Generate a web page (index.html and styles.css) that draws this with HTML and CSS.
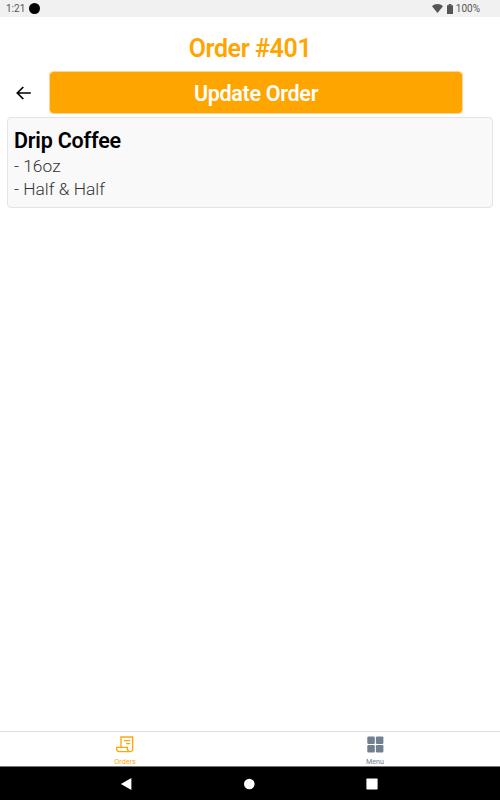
FILE: index.html
```html
<!DOCTYPE html>
<html lang="en">
<head>
  <meta charset="UTF-8" />
  <meta name="viewport" content="width=device-width, initial-scale=1.0"/>
  <title>Order #401</title>
  <link rel="stylesheet" href="styles.css">
</head>
<body>

  <div class="status-bar">
    <span class="time">1:21</span>
    <span class="dot"></span>
    <svg class="wifi" width="11" height="9" viewBox="0 0 11 9"><path d="M0 2.2C3-.6 8-.6 11 2.2L5.5 9z"/></svg>
    <svg class="battery" width="6" height="10" viewBox="0 0 6 10"><path d="M0 1.2h1.7V0h2.6v1.2H6V10H0z"/></svg>
    <span class="percent">100%</span>
  </div>

  <main>
    <h1>Order #401</h1>

    <div class="actions">
      <button class="back" aria-label="Back">
        <svg width="16" height="14" viewBox="0 0 16 14"><path d="M7.3 1 1.3 7l6 6M1.5 7h13.3"/></svg>
      </button>
      <button class="update">Update Order</button>
    </div>

    <div class="item">
      <h2>Drip Coffee</h2>
      <p>- 16oz</p>
      <p>- Half &amp; Half</p>
    </div>
  </main>

  <nav class="tabs">
    <a class="tab active">
      <svg width="18" height="17" viewBox="0 0 18 17"><path d="M5 11V1.2h11.7v11.9a2.4 2.4 0 0 1-2.4 2.5H3.1A2.5 2.5 0 0 1 .7 13.1V11.4h10.6c0 2.6.7 4.2 3 4.2M8 4.7h6.2M10.1 7.7h4.1"/><path class="edge" d="M4.4.3h13"/></svg>
      <span>Orders</span>
    </a>
    <a class="tab">
      <svg width="18" height="17" viewBox="0 0 18 17"><rect x="1.3" y="0.5" width="7.5" height="7.5" rx="1.2"/><rect x="9.9" y="0.5" width="7.5" height="7.5" rx="1.2"/><rect x="1.3" y="9" width="7.5" height="7.5" rx="1.2"/><rect x="9.9" y="9" width="7.5" height="7.5" rx="1.2"/></svg>
      <span>Menu</span>
    </a>
  </nav>

  <div class="system-nav">
    <svg width="12" height="12" viewBox="0 0 12 12"><path d="M.9 6 11.4.1v11.8z"/></svg>
    <svg width="12" height="12" viewBox="0 0 12 12"><circle cx="6.3" cy="6" r="5.3"/></svg>
    <svg width="12" height="12" viewBox="0 0 12 12"><rect x=".4" y=".4" width="11.2" height="11.2" rx=".8"/></svg>
  </div>

</body>
</html>
```
FILE: styles.css
```css
* {
  box-sizing: border-box;
}

body {
  margin: 0;
  height: 800px;
  display: flex;
  flex-direction: column;
  background: #fff;
  font-family: Roboto, sans-serif;
  overflow: hidden;
}

svg {
  display: block;
}

.status-bar {
  display: flex;
  align-items: center;
  height: 17px;
  padding: 0 20px 0 6px;
  background: #f1f1f1;
  color: #555;
  font-size: 10px;
}

.dot {
  width: 11px;
  height: 11px;
  margin-left: 4px;
  border-radius: 50%;
  background: #000;
}

.wifi {
  margin-left: auto;
  fill: #555;
}

.battery {
  margin: 0 3px 0 4px;
  fill: #555;
}

main {
  flex: 1;
  padding: 0 7px;
}

h1 {
  margin: 17px 0 8px;
  color: orange;
  font-size: 25px;
  font-weight: 600;
  line-height: 29px;
  letter-spacing: -0.4px;
  text-align: center;
}

.actions {
  display: flex;
  align-items: center;
}

button {
  border: none;
  padding: 0;
  font-family: inherit;
}

.back {
  width: 42px;
  padding-left: 9px;
  background: none;
}

.back svg {
  fill: none;
  stroke: #000;
  stroke-width: 1.7;
}

.update {
  width: 414px;
  height: 43px;
  padding-top: 2px;
  border: 1px solid #ffd596;
  border-radius: 4px;
  background: orange;
  background-clip: padding-box;
  color: #fff;
  font-size: 21.5px;
  font-weight: 600;
  letter-spacing: -0.3px;
}

.item {
  height: 91px;
  margin-top: 3px;
  padding: 10px 6px 0;
  border: 1px solid #e4e4e4;
  border-radius: 4px;
  background: #f9f9f9;
}

.item h2 {
  margin: 0 0 2px;
  color: #000;
  font-size: 21.5px;
  font-weight: 600;
  line-height: 25px;
  letter-spacing: -0.2px;
}

.item p {
  margin: 0;
  color: #333;
  font-size: 17.4px;
  font-weight: 300;
  line-height: 23px;
}

.tabs {
  display: flex;
  height: 36px;
  border-top: 1px solid #ddd;
}

.tab {
  flex: 1;
  display: flex;
  flex-direction: column;
  align-items: center;
  padding-top: 4px;
  color: #708090;
  font-size: 7.2px;
  line-height: 9px;
}

.tab span {
  margin-top: 4px;
}

.tab svg {
  fill: #708090;
}

.active {
  color: orange;
}

.active svg {
  fill: none;
  stroke: orange;
  stroke-width: 1.3;
}

.active .edge {
  stroke-width: 0.8;
  stroke-dasharray: 1.2 0.8;
}

.system-nav {
  display: flex;
  justify-content: space-between;
  align-items: center;
  height: 34px;
  margin-top: -1px;
  padding: 1px 122px 0 120px;
  border-top: 1px solid #777;
  background: #000;
}

.system-nav svg {
  fill: #fff;
}
```
